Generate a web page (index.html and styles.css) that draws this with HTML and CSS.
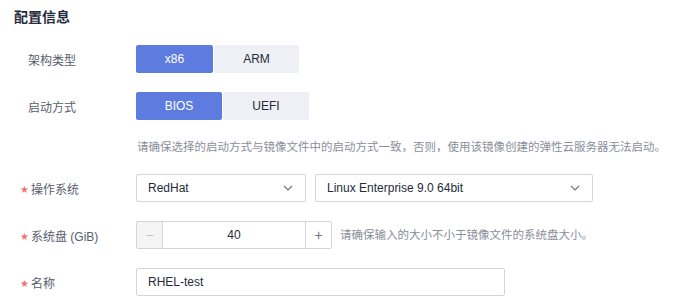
FILE: index.html
```html
<!DOCTYPE html>
<html lang="zh-CN">
  <head>
    <meta charset="UTF-8" />
    <meta name="viewport" content="width=device-width, initial-scale=1.0" />
    <title>配置信息</title>
    <link rel="stylesheet" href="styles.css">
  </head>
  <body>
    <div class="panel">
      <h2 class="title">配置信息</h2>

      <div class="form">
        <div class="row">
          <div class="label">架构类型</div>
          <div class="seg seg-arch">
            <button class="seg-btn active">x86</button>
            <button class="seg-btn">ARM</button>
          </div>
        </div>

        <div class="row">
          <div class="label">启动方式</div>
          <div class="seg seg-boot">
            <button class="seg-btn active">BIOS</button>
            <button class="seg-btn">UEFI</button>
          </div>
        </div>

        <div class="row hint-row">
          <div class="label"></div>
          <p class="hint">请确保选择的启动方式与镜像文件中的启动方式一致，否则，使用该镜像创建的弹性云服务器无法启动。</p>
        </div>

        <div class="row">
          <div class="label required">操作系统</div>
          <div class="select select-os">
            <span>RedHat</span>
            <svg class="chevron" viewBox="0 0 10 6" width="10" height="6"><path d="M1 1l4 4 4-4" fill="none" stroke="#71757f" stroke-width="1.2"/></svg>
          </div>
          <div class="select select-ver">
            <span>Linux Enterprise 9.0 64bit</span>
            <svg class="chevron" viewBox="0 0 10 6" width="10" height="6"><path d="M1 1l4 4 4-4" fill="none" stroke="#71757f" stroke-width="1.2"/></svg>
          </div>
        </div>

        <div class="row">
          <div class="label required">系统盘 (GiB)</div>
          <div class="number">
            <button class="num-btn disabled">−</button>
            <input class="num-input" type="text" value="40">
            <button class="num-btn">+</button>
          </div>
          <span class="hint inline">请确保输入的大小不小于镜像文件的系统盘大小。</span>
        </div>

        <div class="row">
          <div class="label required">名称</div>
          <input class="text-input" type="text" value="RHEL-test">
        </div>
      </div>
    </div>
  </body>
</html>
```

FILE: styles.css
```css
body {
  margin: 0;
  background: #ffffff;
  font-family: "Liberation Sans", "Noto Sans CJK SC", sans-serif;
  font-size: 12px;
  color: #252b3a;
}
.panel {
  padding: 7px 0 0 14px;
}
.title {
  margin: 0 0 18px;
  font-size: 14px;
  line-height: 20px;
  font-weight: bold;
  color: #252b3a;
}
.form {
  display: flex;
  flex-direction: column;
  gap: 19px;
}
.row {
  display: flex;
  align-items: center;
  height: 28px;
}
.hint-row {
  height: 16px;
}
.label {
  width: 122px;
  flex-shrink: 0;
  padding-left: 14px;
  box-sizing: border-box;
  color: #575d6c;
  font-size: 12px;
}
.label.required {
  padding-left: 6px;
}
.label.required::before {
  content: "★";
  font-family: "DejaVu Sans", sans-serif;
  font-size: 10px;
  color: #f0726c;
  margin-right: 2px;
  position: relative;
  top: -1px;
}
.seg {
  display: flex;
  gap: 1px;
  height: 28px;
}
.seg-btn {
  border: none;
  border-radius: 2px;
  background: #eef0f5;
  color: #252b3a;
  font-family: inherit;
  font-size: 12px;
  padding: 0;
  cursor: pointer;
}
.seg-btn.active {
  background: #5e7ce0;
  color: #ffffff;
}
.seg-arch .seg-btn:first-child {
  width: 77px;
}
.seg-arch .seg-btn:last-child {
  width: 85px;
}
.seg-boot .seg-btn {
  width: 86px;
}
.hint {
  margin: 0;
  color: #8a8e99;
  font-size: 11.5px;
  line-height: 16px;
  white-space: nowrap;
}
.hint-row .hint {
  margin-left: 1px;
}
.hint.inline {
  margin-left: 8px;
}
.select {
  display: flex;
  align-items: center;
  justify-content: space-between;
  height: 28px;
  box-sizing: border-box;
  border: 1px solid #d3d5d9;
  border-radius: 2px;
  padding: 0 12px 0 11px;
}
.select-os {
  width: 170px;
}
.select-ver {
  width: 278px;
  margin-left: 9px;
}
.chevron {
  display: block;
}
.number {
  display: flex;
  height: 28px;
  box-sizing: border-box;
  border: 1px solid #d3d5d9;
  border-radius: 2px;
}
.num-btn {
  width: 26px;
  border: none;
  background: #ffffff;
  color: #71757f;
  font-family: inherit;
  font-size: 14px;
  padding: 0;
}
.num-btn.disabled {
  background: #f5f5f6;
  color: #c2c4c9;
  border-right: 1px solid #d3d5d9;
}
.num-btn:last-child {
  border-left: 1px solid #d3d5d9;
}
.num-input {
  width: 142px;
  border: none;
  padding: 0;
  text-align: center;
  font-family: inherit;
  font-size: 12px;
  color: #252b3a;
  outline: none;
}
.text-input {
  width: 369px;
  height: 28px;
  box-sizing: border-box;
  border: 1px solid #d3d5d9;
  border-radius: 2px;
  padding: 0 11px;
  font-family: inherit;
  font-size: 12px;
  color: #252b3a;
  outline: none;
}
```
